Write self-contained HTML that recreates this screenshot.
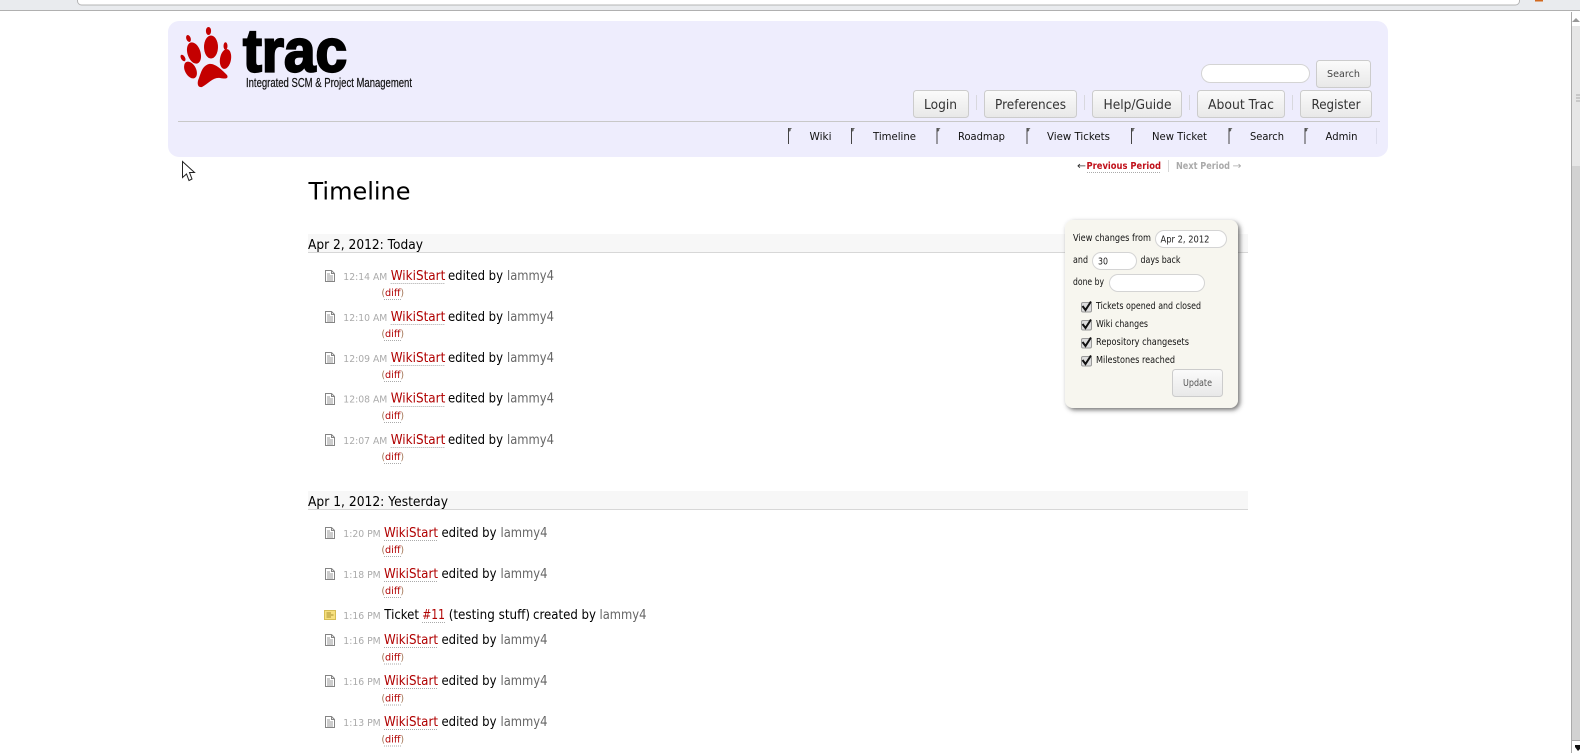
<!DOCTYPE html>
<html><head><meta charset="utf-8"><title>Timeline</title>
<style>
html,body{margin:0;padding:0;background:#fff;width:1580px;height:753px;overflow:hidden}
svg{display:block}
text{font-family:"DejaVu Sans","Liberation Sans",sans-serif;fill:#000}
.nav{font-size:13px;fill:#333}
.m{font-size:10.5px;fill:#111}
.f{font-size:9.5px;fill:#111}
.t{font-size:10px;fill:#aaa}
.r{font-size:13px;fill:#000}
.a{font-size:13px;fill:#b00000}
.u{font-size:13px;fill:#666}
.d{font-size:10px;fill:#a07050}
.da{font-size:10px;fill:#b00000}
.h{font-size:13px;fill:#000}
.dot{stroke:#aaa;stroke-width:1;stroke-dasharray:1 1}
.btn{fill:url(#bg);stroke:#ccc;stroke-width:1}
.inp{fill:#fff;stroke:#d4d4d4;stroke-width:1}
</style></head><body>
<svg xmlns="http://www.w3.org/2000/svg" width="1580" height="753" viewBox="0 0 1580 753">
<defs>
<linearGradient id="bg" x1="0" y1="0" x2="0" y2="1"><stop offset="0" stop-color="#fbfbfb"/><stop offset="1" stop-color="#e8e8e8"/></linearGradient>
<filter id="sh" x="-10%" y="-10%" width="125%" height="125%"><feDropShadow dx="2" dy="2" stdDeviation="2.5" flood-color="#444" flood-opacity=".75"/></filter>
<g id="pg"><path d="M.5.5H6.5L9.5 3.5V11.5H.5Z" fill="#fff" stroke="#858585"/><path d="M6.5.5V3.5H9.5" fill="none" stroke="#858585"/><path d="M2 4H5M2 6H8M2 8H8M2 10H8" stroke="#999"/></g>
<g id="fl"><path d="M.5 0V16" stroke="#444"/><path d="M1 0H4L2.6 1.5V3L1 3.6Z" fill="#666"/></g>
<path id="ck" d="M1.5 5.5L4.5 9.5 10 1" fill="none" stroke="#111" stroke-width="2"/>
</defs>

<!-- browser chrome -->
<rect width="1580" height="10" fill="#e9ebee"/>
<rect y="10" width="1580" height="1" fill="#b0b0b0"/>
<rect x="77.5" y="-5" width="1442" height="10" rx="4" fill="#fff" stroke="#b4b4b4"/>
<rect x="1535" y="0" width="8" height="1.5" fill="#d2691e"/>

<!-- scrollbar -->
<rect x="1571" y="11" width="9" height="742" fill="#fff"/>
<rect x="1572" y="26" width="8" height="714" fill="#e6e6e6"/>
<rect x="1572" y="166" width="8" height="574" fill="#d2d2d2"/>
<rect x="1571" y="12" width="1" height="741" fill="#aaa"/>
<path d="M1576 18L1572 22H1580Z" fill="#999"/>
<path d="M1575 745H1580V749L1578 751 1575 747Z" fill="#111"/>
<path d="M1576 95H1580M1576 98H1580M1576 101H1580" stroke="#aaa"/>
<rect x="1572" y="740" width="8" height="1" fill="#aaa"/>

<!-- header -->
<rect x="168" y="21" width="1220" height="136" rx="11" fill="#eeedfd"/>
<rect x="178" y="121" width="1202" height="1" fill="#c8c8c8"/>

<!-- logo -->
<g fill="#c40000">
<ellipse cx="211" cy="47" rx="7" ry="11.5"/>
<ellipse cx="194" cy="53" rx="6.5" ry="11" transform="rotate(-18 194 53)"/>
<ellipse cx="225.5" cy="59" rx="5.5" ry="10" transform="rotate(10 225.5 59)"/>
<ellipse cx="190.5" cy="70" rx="5.5" ry="9" transform="rotate(-28 190.5 70)"/>
<ellipse cx="208.5" cy="31" rx="2.6" ry="4"/>
<ellipse cx="188.5" cy="38.5" rx="2.2" ry="3.6" transform="rotate(-20 188.5 38.5)"/>
<ellipse cx="225.5" cy="46" rx="2" ry="3.8"/>
<ellipse cx="183" cy="58" rx="2" ry="3.6" transform="rotate(-30 183 58)"/>
<path d="M209 64C215 63 222 70 227 75C229 79 225 79 220 78C213 77 208 84 202 87C197 88 197 82 199 78C201 73 202 66 209 64Z"/>
</g>
<text x="243" y="71.5" textLength="104" lengthAdjust="spacingAndGlyphs" style="font:bold 60px 'Liberation Sans',sans-serif;fill:#000;stroke:#000;stroke-width:2.2">trac</text>
<text x="246" y="87" textLength="166" lengthAdjust="spacingAndGlyphs" style="font:12.5px 'Liberation Sans',sans-serif;fill:#111;stroke:#111;stroke-width:.2">Integrated SCM &amp; Project Management</text>

<!-- search -->
<rect class="inp" x="1201.5" y="64.5" width="108" height="18" rx="9"/>
<rect class="btn" x="1316.5" y="60.5" width="54" height="27" rx="3"/>
<text x="1327" y="77" textLength="33" lengthAdjust="spacingAndGlyphs" style="font-size:10px;fill:#444">Search</text>

<!-- meta nav -->
<rect class="btn" x="913.5" y="90.5" width="55" height="27" rx="3"/>
<rect class="btn" x="984.5" y="90.5" width="92" height="27" rx="3"/>
<rect class="btn" x="1092.5" y="90.5" width="89" height="27" rx="3"/>
<rect class="btn" x="1197.5" y="90.5" width="87" height="27" rx="3"/>
<rect class="btn" x="1300.5" y="90.5" width="71" height="27" rx="3"/>
<path d="M976.5 95V110M1084.5 95V110M1189.5 95V110M1292.5 95V110" stroke="#d8d8de"/>
<text x="924" y="109" class="nav" textLength="33" lengthAdjust="spacingAndGlyphs">Login</text>
<text x="995" y="109" class="nav" textLength="71" lengthAdjust="spacingAndGlyphs">Preferences</text>
<text x="1103.5" y="109" class="nav" textLength="68" lengthAdjust="spacingAndGlyphs">Help/Guide</text>
<text x="1208" y="109" class="nav" textLength="66" lengthAdjust="spacingAndGlyphs">About Trac</text>
<text x="1311.5" y="109" class="nav" textLength="49" lengthAdjust="spacingAndGlyphs">Register</text>

<!-- main nav -->
<use href="#fl" x="788" y="128"/><use href="#fl" x="851" y="128"/><use href="#fl" x="936.5" y="128"/><use href="#fl" x="1026.5" y="128"/><use href="#fl" x="1131" y="128"/><use href="#fl" x="1228.5" y="128"/><use href="#fl" x="1304.5" y="128"/>
<path d="M1376.5 128V144" stroke="#dcdcec"/>
<text x="809.5" y="140" class="m" textLength="22" lengthAdjust="spacingAndGlyphs">Wiki</text>
<text x="873" y="140" class="m" textLength="43" lengthAdjust="spacingAndGlyphs">Timeline</text>
<text x="958" y="140" class="m" textLength="47" lengthAdjust="spacingAndGlyphs">Roadmap</text>
<text x="1047" y="140" class="m" textLength="63" lengthAdjust="spacingAndGlyphs">View Tickets</text>
<text x="1152" y="140" class="m" textLength="55" lengthAdjust="spacingAndGlyphs">New Ticket</text>
<text x="1250" y="140" class="m" textLength="34" lengthAdjust="spacingAndGlyphs">Search</text>
<text x="1325.5" y="140" class="m" textLength="32" lengthAdjust="spacingAndGlyphs">Admin</text>

<!-- period nav -->
<text x="1077" y="169" style="font-size:10px;fill:#333" textLength="9" lengthAdjust="spacingAndGlyphs">←</text>
<text x="1086.5" y="169" style="font-size:10px;font-weight:bold;fill:#c0101a" textLength="74.5" lengthAdjust="spacingAndGlyphs">Previous Period</text>
<line class="dot" x1="1087" x2="1161" y1="172.5" y2="172.5"/>
<path d="M1168.5 160V172" stroke="#d7d7d7"/>
<text x="1176" y="169" style="font-size:10px;font-weight:bold;fill:#aaa" textLength="54" lengthAdjust="spacingAndGlyphs">Next Period</text>
<text x="1232.5" y="169" style="font-size:10px;fill:#aaa" textLength="9" lengthAdjust="spacingAndGlyphs">→</text>

<!-- title -->
<text x="308.5" y="199.5" textLength="102" lengthAdjust="spacingAndGlyphs" style="font-size:24px;fill:#000">Timeline</text>

<!-- day 1 -->
<rect x="308" y="234" width="940" height="18" fill="#f7f7f7"/>
<rect x="308" y="252" width="940" height="1" fill="#d7d7d7"/>
<text x="308" y="249" class="h" textLength="115" lengthAdjust="spacingAndGlyphs">Apr 2, 2012: Today</text>

<use href="#pg" x="325" y="270"/>
<text x="343.3" y="280" class="t" textLength="44" lengthAdjust="spacingAndGlyphs">12:14 AM</text>
<text x="390.7" y="280" class="a" textLength="54.6" lengthAdjust="spacingAndGlyphs">WikiStart</text>
<line class="dot" x1="390.7" x2="445" y1="283.5" y2="283.5"/>
<text x="448" y="280" class="r" textLength="55" lengthAdjust="spacingAndGlyphs">edited by</text>
<text x="507" y="280" class="u" textLength="47" lengthAdjust="spacingAndGlyphs">lammy4</text>
<text x="381.5" y="296" class="d" textLength="3.5" lengthAdjust="spacingAndGlyphs">(</text><text x="385" y="296" class="da" textLength="15.5" lengthAdjust="spacingAndGlyphs">diff</text><text x="400.5" y="296" class="d" textLength="3.5" lengthAdjust="spacingAndGlyphs">)</text>
<line class="dot" x1="384" x2="401" y1="299.5" y2="299.5"/>

<use href="#pg" x="325" y="311"/>
<text x="343.3" y="320.8" class="t" textLength="44" lengthAdjust="spacingAndGlyphs">12:10 AM</text>
<text x="390.7" y="320.8" class="a" textLength="54.6" lengthAdjust="spacingAndGlyphs">WikiStart</text>
<line class="dot" x1="390.7" x2="445" y1="324.5" y2="324.5"/>
<text x="448" y="320.8" class="r" textLength="55" lengthAdjust="spacingAndGlyphs">edited by</text>
<text x="507" y="320.8" class="u" textLength="47" lengthAdjust="spacingAndGlyphs">lammy4</text>
<text x="381.5" y="337" class="d" textLength="3.5" lengthAdjust="spacingAndGlyphs">(</text><text x="385" y="337" class="da" textLength="15.5" lengthAdjust="spacingAndGlyphs">diff</text><text x="400.5" y="337" class="d" textLength="3.5" lengthAdjust="spacingAndGlyphs">)</text>
<line class="dot" x1="384" x2="401" y1="340.5" y2="340.5"/>

<use href="#pg" x="325" y="352"/>
<text x="343.3" y="362" class="t" textLength="44" lengthAdjust="spacingAndGlyphs">12:09 AM</text>
<text x="390.7" y="362" class="a" textLength="54.6" lengthAdjust="spacingAndGlyphs">WikiStart</text>
<line class="dot" x1="390.7" x2="445" y1="365.5" y2="365.5"/>
<text x="448" y="362" class="r" textLength="55" lengthAdjust="spacingAndGlyphs">edited by</text>
<text x="507" y="362" class="u" textLength="47" lengthAdjust="spacingAndGlyphs">lammy4</text>
<text x="381.5" y="378" class="d" textLength="3.5" lengthAdjust="spacingAndGlyphs">(</text><text x="385" y="378" class="da" textLength="15.5" lengthAdjust="spacingAndGlyphs">diff</text><text x="400.5" y="378" class="d" textLength="3.5" lengthAdjust="spacingAndGlyphs">)</text>
<line class="dot" x1="384" x2="401" y1="381.5" y2="381.5"/>

<use href="#pg" x="325" y="393"/>
<text x="343.3" y="402.6" class="t" textLength="44" lengthAdjust="spacingAndGlyphs">12:08 AM</text>
<text x="390.7" y="402.6" class="a" textLength="54.6" lengthAdjust="spacingAndGlyphs">WikiStart</text>
<line class="dot" x1="390.7" x2="445" y1="406.5" y2="406.5"/>
<text x="448" y="402.6" class="r" textLength="55" lengthAdjust="spacingAndGlyphs">edited by</text>
<text x="507" y="402.6" class="u" textLength="47" lengthAdjust="spacingAndGlyphs">lammy4</text>
<text x="381.5" y="419" class="d" textLength="3.5" lengthAdjust="spacingAndGlyphs">(</text><text x="385" y="419" class="da" textLength="15.5" lengthAdjust="spacingAndGlyphs">diff</text><text x="400.5" y="419" class="d" textLength="3.5" lengthAdjust="spacingAndGlyphs">)</text>
<line class="dot" x1="384" x2="401" y1="422.5" y2="422.5"/>

<use href="#pg" x="325" y="434"/>
<text x="343.3" y="444" class="t" textLength="44" lengthAdjust="spacingAndGlyphs">12:07 AM</text>
<text x="390.7" y="444" class="a" textLength="54.6" lengthAdjust="spacingAndGlyphs">WikiStart</text>
<line class="dot" x1="390.7" x2="445" y1="447.5" y2="447.5"/>
<text x="448" y="444" class="r" textLength="55" lengthAdjust="spacingAndGlyphs">edited by</text>
<text x="507" y="444" class="u" textLength="47" lengthAdjust="spacingAndGlyphs">lammy4</text>
<text x="381.5" y="460" class="d" textLength="3.5" lengthAdjust="spacingAndGlyphs">(</text><text x="385" y="460" class="da" textLength="15.5" lengthAdjust="spacingAndGlyphs">diff</text><text x="400.5" y="460" class="d" textLength="3.5" lengthAdjust="spacingAndGlyphs">)</text>
<line class="dot" x1="384" x2="401" y1="463.5" y2="463.5"/>

<!-- day 2 -->
<rect x="308" y="491" width="940" height="18" fill="#f7f7f7"/>
<rect x="308" y="509" width="940" height="1" fill="#d7d7d7"/>
<text x="308" y="506" class="h" textLength="140" lengthAdjust="spacingAndGlyphs">Apr 1, 2012: Yesterday</text>

<use href="#pg" x="325" y="527"/>
<text x="343.3" y="537" class="t" textLength="37.4" lengthAdjust="spacingAndGlyphs">1:20 PM</text>
<text x="384" y="537" class="a" textLength="54" lengthAdjust="spacingAndGlyphs">WikiStart</text>
<line class="dot" x1="384" x2="438" y1="540.5" y2="540.5"/>
<text x="441.5" y="537" class="r" textLength="55" lengthAdjust="spacingAndGlyphs">edited by</text>
<text x="500.5" y="537" class="u" textLength="47" lengthAdjust="spacingAndGlyphs">lammy4</text>
<text x="381.5" y="553" class="d" textLength="3.5" lengthAdjust="spacingAndGlyphs">(</text><text x="385" y="553" class="da" textLength="15.5" lengthAdjust="spacingAndGlyphs">diff</text><text x="400.5" y="553" class="d" textLength="3.5" lengthAdjust="spacingAndGlyphs">)</text>
<line class="dot" x1="384" x2="401" y1="556.5" y2="556.5"/>

<use href="#pg" x="325" y="568"/>
<text x="343.3" y="578" class="t" textLength="37.4" lengthAdjust="spacingAndGlyphs">1:18 PM</text>
<text x="384" y="578" class="a" textLength="54" lengthAdjust="spacingAndGlyphs">WikiStart</text>
<line class="dot" x1="384" x2="438" y1="581.5" y2="581.5"/>
<text x="441.5" y="578" class="r" textLength="55" lengthAdjust="spacingAndGlyphs">edited by</text>
<text x="500.5" y="578" class="u" textLength="47" lengthAdjust="spacingAndGlyphs">lammy4</text>
<text x="381.5" y="594" class="d" textLength="3.5" lengthAdjust="spacingAndGlyphs">(</text><text x="385" y="594" class="da" textLength="15.5" lengthAdjust="spacingAndGlyphs">diff</text><text x="400.5" y="594" class="d" textLength="3.5" lengthAdjust="spacingAndGlyphs">)</text>
<line class="dot" x1="384" x2="401" y1="597.5" y2="597.5"/>

<rect x="324.5" y="610.5" width="11" height="9" fill="#f7e07e" stroke="#d6bd55"/>
<path d="M326.5 613H331M326.5 615H333.5M326.5 617H331" stroke="#a89030"/>
<text x="343.3" y="619" class="t" textLength="37.4" lengthAdjust="spacingAndGlyphs">1:16 PM</text>
<text x="384.3" y="619" class="r" textLength="34.7" lengthAdjust="spacingAndGlyphs">Ticket</text>
<text x="422.3" y="619" class="a" textLength="22.7" lengthAdjust="spacingAndGlyphs">#11</text>
<line class="dot" x1="422" x2="445" y1="622.5" y2="622.5"/>
<text x="448.7" y="619" class="r" textLength="81.3" lengthAdjust="spacingAndGlyphs">(testing stuff)</text>
<text x="533" y="619" class="r" textLength="63" lengthAdjust="spacingAndGlyphs">created by</text>
<text x="599.5" y="619" class="u" textLength="47" lengthAdjust="spacingAndGlyphs">lammy4</text>

<use href="#pg" x="325" y="634"/>
<text x="343.3" y="644" class="t" textLength="37.4" lengthAdjust="spacingAndGlyphs">1:16 PM</text>
<text x="384" y="644" class="a" textLength="54" lengthAdjust="spacingAndGlyphs">WikiStart</text>
<line class="dot" x1="384" x2="438" y1="647.5" y2="647.5"/>
<text x="441.5" y="644" class="r" textLength="55" lengthAdjust="spacingAndGlyphs">edited by</text>
<text x="500.5" y="644" class="u" textLength="47" lengthAdjust="spacingAndGlyphs">lammy4</text>
<text x="381.5" y="660.5" class="d" textLength="3.5" lengthAdjust="spacingAndGlyphs">(</text><text x="385" y="660.5" class="da" textLength="15.5" lengthAdjust="spacingAndGlyphs">diff</text><text x="400.5" y="660.5" class="d" textLength="3.5" lengthAdjust="spacingAndGlyphs">)</text>
<line class="dot" x1="384" x2="401" y1="664" y2="664"/>

<use href="#pg" x="325" y="675"/>
<text x="343.3" y="684.9" class="t" textLength="37.4" lengthAdjust="spacingAndGlyphs">1:16 PM</text>
<text x="384" y="684.9" class="a" textLength="54" lengthAdjust="spacingAndGlyphs">WikiStart</text>
<line class="dot" x1="384" x2="438" y1="688.5" y2="688.5"/>
<text x="441.5" y="684.9" class="r" textLength="55" lengthAdjust="spacingAndGlyphs">edited by</text>
<text x="500.5" y="684.9" class="u" textLength="47" lengthAdjust="spacingAndGlyphs">lammy4</text>
<text x="381.5" y="701.5" class="d" textLength="3.5" lengthAdjust="spacingAndGlyphs">(</text><text x="385" y="701.5" class="da" textLength="15.5" lengthAdjust="spacingAndGlyphs">diff</text><text x="400.5" y="701.5" class="d" textLength="3.5" lengthAdjust="spacingAndGlyphs">)</text>
<line class="dot" x1="384" x2="401" y1="705" y2="705"/>

<use href="#pg" x="325" y="716"/>
<text x="343.3" y="726" class="t" textLength="37.4" lengthAdjust="spacingAndGlyphs">1:13 PM</text>
<text x="384" y="726" class="a" textLength="54" lengthAdjust="spacingAndGlyphs">WikiStart</text>
<line class="dot" x1="384" x2="438" y1="729.5" y2="729.5"/>
<text x="441.5" y="726" class="r" textLength="55" lengthAdjust="spacingAndGlyphs">edited by</text>
<text x="500.5" y="726" class="u" textLength="47" lengthAdjust="spacingAndGlyphs">lammy4</text>
<text x="381.5" y="742.5" class="d" textLength="3.5" lengthAdjust="spacingAndGlyphs">(</text><text x="385" y="742.5" class="da" textLength="15.5" lengthAdjust="spacingAndGlyphs">diff</text><text x="400.5" y="742.5" class="d" textLength="3.5" lengthAdjust="spacingAndGlyphs">)</text>
<line class="dot" x1="384" x2="401" y1="746" y2="746"/>

<!-- filter box -->
<rect x="1065" y="220" width="173" height="188" rx="8" fill="#f7f6ef" filter="url(#sh)"/>
<text x="1073" y="241" class="f" textLength="78" lengthAdjust="spacingAndGlyphs">View changes from</text>
<rect class="inp" x="1155.5" y="230.5" width="71" height="17" rx="8.5"/>
<text x="1160.5" y="242.5" style="font:9.5px 'DejaVu Sans',sans-serif;fill:#222" textLength="49" lengthAdjust="spacingAndGlyphs">Apr 2, 2012</text>
<text x="1073" y="263" class="f" textLength="15" lengthAdjust="spacingAndGlyphs">and</text>
<rect class="inp" x="1092.5" y="252.5" width="44" height="17" rx="8.5"/>
<text x="1098" y="264.5" style="font:9.5px 'DejaVu Sans',sans-serif;fill:#222" textLength="10" lengthAdjust="spacingAndGlyphs">30</text>
<text x="1140.5" y="263" class="f" textLength="40" lengthAdjust="spacingAndGlyphs">days back</text>
<text x="1073" y="285" class="f" textLength="31" lengthAdjust="spacingAndGlyphs">done by</text>
<rect class="inp" x="1109.5" y="274.5" width="95" height="17" rx="8.5"/>

<g fill="#ddd" stroke="#999">
<rect x="1081.5" y="302.5" width="10" height="9.5" rx="1.5"/>
<rect x="1081.5" y="320.5" width="10" height="9.5" rx="1.5"/>
<rect x="1081.5" y="338.5" width="10" height="9.5" rx="1.5"/>
<rect x="1081.5" y="356.5" width="10" height="9.5" rx="1.5"/>
</g>
<use href="#ck" x="1081" y="300.5"/><use href="#ck" x="1081" y="318.5"/><use href="#ck" x="1081" y="336.5"/><use href="#ck" x="1081" y="354.5"/>
<text x="1096" y="309" class="f" textLength="105" lengthAdjust="spacingAndGlyphs">Tickets opened and closed</text>
<text x="1096" y="327" class="f" textLength="52" lengthAdjust="spacingAndGlyphs">Wiki changes</text>
<text x="1096" y="345" class="f" textLength="93" lengthAdjust="spacingAndGlyphs">Repository changesets</text>
<text x="1096" y="362.8" class="f" textLength="79" lengthAdjust="spacingAndGlyphs">Milestones reached</text>
<rect class="btn" x="1172.5" y="369.5" width="50" height="27" rx="3"/>
<text x="1183" y="386" style="font-size:9.5px;fill:#555" textLength="29" lengthAdjust="spacingAndGlyphs">Update</text>

<!-- cursor -->
<path d="M182.5 161.5V177.5L186.5 174 189 180.5 192 179 189.5 172.5H194.5Z" fill="#fff" stroke="#222" stroke-width="1"/>
</svg>
</body></html>
